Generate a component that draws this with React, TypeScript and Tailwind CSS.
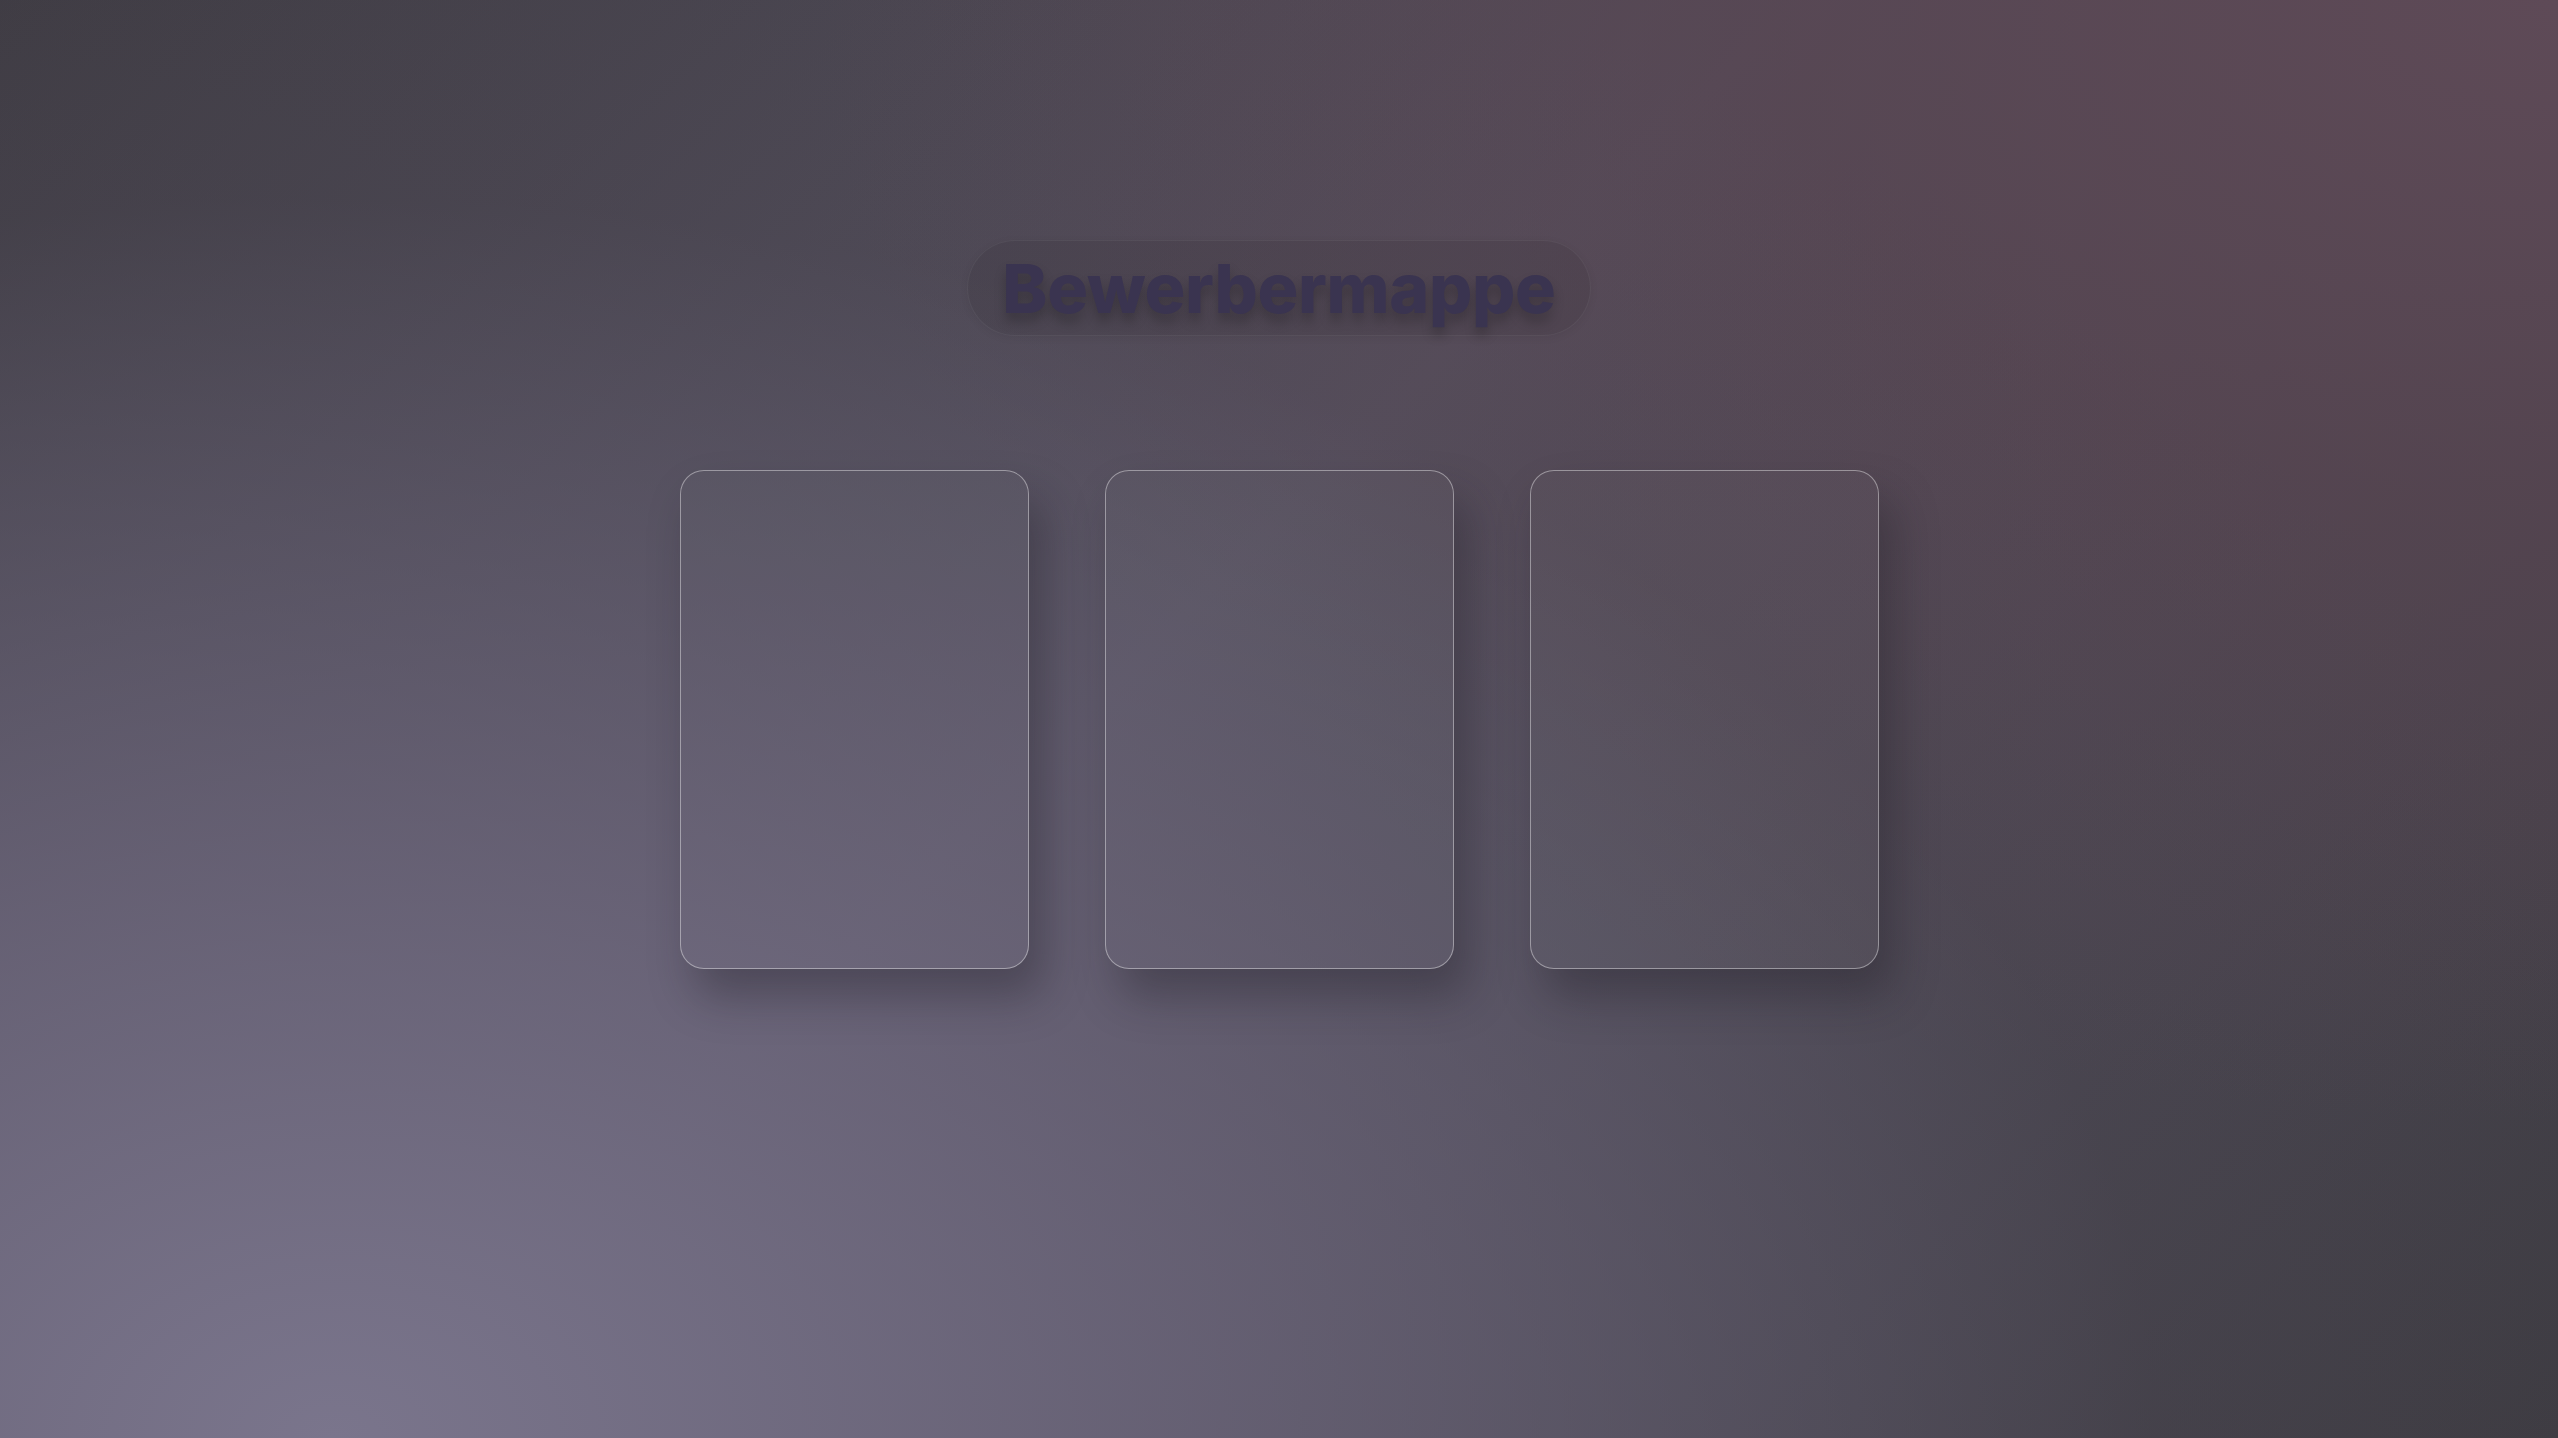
export default function App() {
  const cards = [0, 1, 2];

  return (
    <div className="relative flex min-h-screen w-full flex-col items-center overflow-hidden bg-[#3e3b42] bg-[radial-gradient(ellipse_95%_115%_at_13%_100%,#7a758c_0%,rgba(110,104,126,0.75)_35%,rgba(80,75,90,0.2)_75%,transparent_100%),radial-gradient(ellipse_68%_78%_at_100%_0%,#5e4a57_0%,rgba(88,68,80,0.7)_45%,transparent_100%),linear-gradient(135deg,#3e3b42_0%,#55505e_45%,#3d3b41_100%)] font-['Inter','Liberation_Sans',sans-serif]">
      {/* Title pill */}
      <div className="mt-[240px] flex h-[96px] w-[624px] items-center justify-center rounded-full border border-white/5 bg-black/[0.07] shadow-[0_2px_8px_rgba(0,0,0,0.06)]">
        <h1 className="text-[68px] leading-none font-extrabold tracking-[-0.3px] text-[#3a3450] [text-shadow:0_8px_12px_rgba(0,0,0,0.22)]">
          Bewerbermappe
        </h1>
      </div>

      {/* Cards */}
      <div className="mt-[134px] flex gap-[76px]">
        {cards.map((c) => (
          <div
            key={c}
            className="h-[499px] w-[349px] rounded-[24px] border border-white/40 bg-white/[0.025] shadow-[14px_28px_44px_rgba(30,25,35,0.35)]"
          />
        ))}
      </div>
    </div>
  );
}
